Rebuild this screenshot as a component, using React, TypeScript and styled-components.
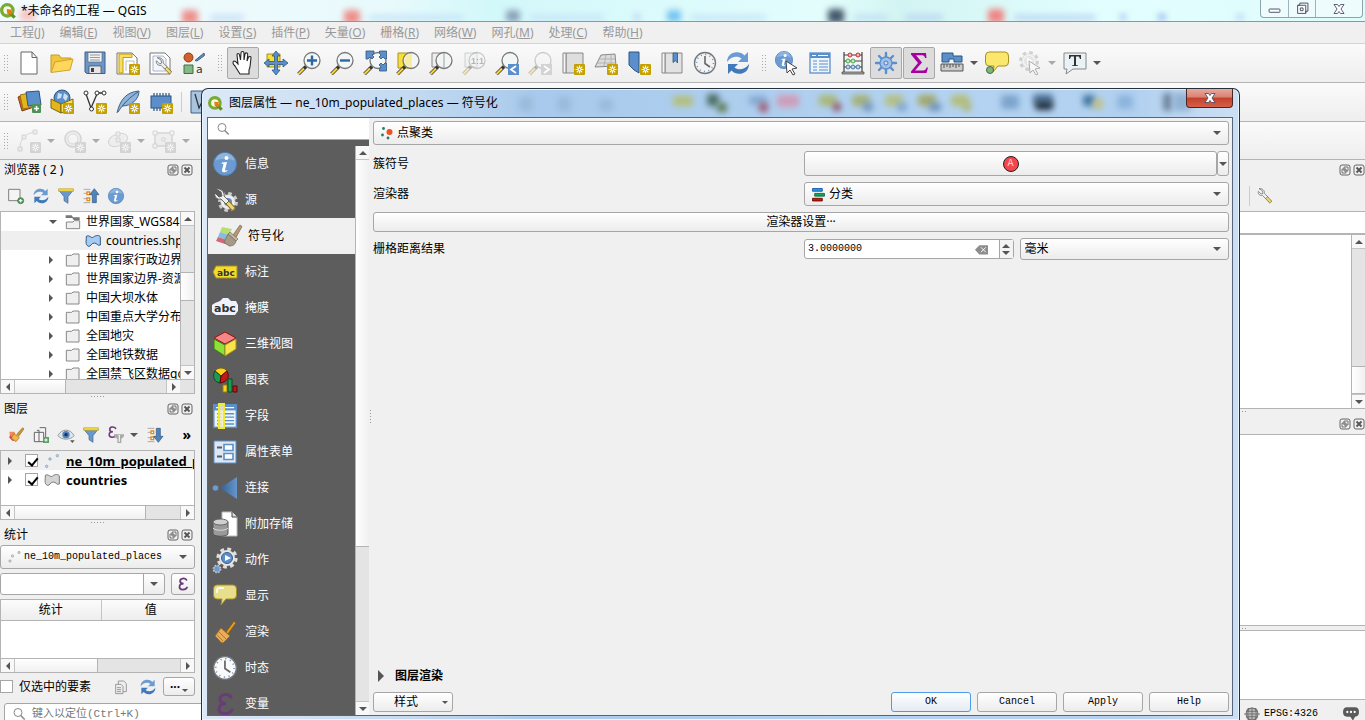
import React from 'react';
import styled, { createGlobalStyle, css } from 'styled-components';

const UI = '"Noto Sans", "Noto Sans CJK SC", sans-serif';
const MONO = '"Liberation Mono", "Noto Sans CJK SC", monospace';

const Global = createGlobalStyle`
  * { box-sizing: border-box; }
  html, body { margin: 0; padding: 0; overflow: hidden; }
  body { background: #f0f0f0; color: #000; font: 12px/18px ${UI}; }
  button, input, select { font: inherit; color: inherit; margin: 0; padding: 0; border: 0; background: none; outline: none; border-radius: 0; }
  button { display: inline-flex; align-items: center; justify-content: center; }
  ul { list-style: none; margin: 0; padding: 0; }
  svg { display: block; flex: none; }
`;

/* ---------- icons ---------- */

const Star = () => (
  <g>
    <rect x="13" y="13" width="11" height="11" rx="1" fill="#c4a000" />
    <path d="M18.500 14.500v8M14.500 18.500h8M15.700 15.700l5.600 5.600M21.300 15.700l-5.600 5.600" stroke="#fff" strokeWidth="1.200" />
    <circle cx="18.500" cy="18.500" r="1" fill="#c4a000" />
  </g>
);

const Lens = ({ children, dim }: { children?: React.ReactNode; dim?: boolean }) => (
  <g opacity={dim ? 0.35 : 1}>
    <path d="M9 15.500L1.500 23" stroke="#333" strokeWidth="3.500" />
    <path d="M7 17.500L1.500 23" stroke="#fcd23c" strokeWidth="2.200" />
    <circle cx="15" cy="9.500" r="8" fill="#f3f6f6" fillOpacity="0.800" stroke="#777" strokeWidth="1.300" />
    {children}
  </g>
);

const Sheet = () => (
  <path d="M1 2h15l5 5v16H1z" fill="#fff" stroke="#777" />
);

const Gear = ({ cx = 12, cy = 12, r = 8, fill = '#8cb0dd', stroke = '#4a72a8' }: { cx?: number; cy?: number; r?: number; fill?: string; stroke?: string }) => (
  <g>
    <circle cx={cx} cy={cy} r={r} fill="none" stroke={stroke} strokeWidth={r / 2} strokeDasharray={`${r * 0.42} ${r * 0.365}`} />
    <circle cx={cx} cy={cy} r={r * 0.9} fill={fill} stroke={stroke} strokeWidth="0.600" />
  </g>
);

const Refresh = () => (
  <g fill="#6b9bd2">
    <path d="M1 11C1 4 7 0 13 1.500c3 .5 4.500 2 5.500 3L22 1v10H12l3.500-3.500C12 4.500 5 5 1 11z" />
    <path d="M23 13c0 7-6 11-12 9.500-3-.5-4.500-2-5.500-3L2 23V13h10l-3.500 3.500C12 19.500 19 19 23 13z" fill="#4179bb" />
  </g>
);

const Info = () => (
  <g>
    <circle cx="12" cy="12" r="11.500" fill="#6b9bd2" stroke="#4f7fb8" />
    <path d="M2 9C4 3 8 1 12 1s8 2 10 8c-5-3-15-3-20 0z" fill="#8db3de" />
    <circle cx="13.500" cy="6" r="2" fill="#fff" />
    <path d="M9 10.500l5-.5-2 8c0 1 1 .8 2 0l.5.700c-2 2-6 2.300-5.500-.7l1.500-6-2-.3z" fill="#fff" />
  </g>
);

const ClockFace = ({ fill = '#f2f2f2' }: { fill?: string }) => (
  <g>
    <circle cx="12" cy="12" r="10.500" fill={fill} stroke="#777" strokeWidth="1.300" />
    <circle cx="12" cy="12" r="8.500" fill="none" stroke="#5b8fcb" strokeWidth="1.500" strokeDasharray="1 3.450" />
    <path d="M12 5v7.500l5 3.500" fill="none" stroke="#666" strokeWidth="1.600" />
  </g>
);

const Wrench = () => (
  <g>
    <path d="M13 13l8 8.500" stroke="#8a7430" strokeWidth="5" />
    <path d="M13.500 13.500l7 7.500" stroke="#f0d77a" strokeWidth="3" />
    <path d="M3 1l5 3 1 4-3 1-4-4C1 9 4 12 8 11l5 5 3-3-5-5c1-4-3-8-8-7z" fill="#eee" stroke="#555" strokeWidth="0.900" />
  </g>
);

const Funnel = () => (
  <g>
    <path d="M1 3h22l-8 10v10l-6-4v-6z" fill="#6b98cc" stroke="#3d6490" />
    <path d="M1 1h22v4H1z" fill="#f6d83c" stroke="#a89020" strokeWidth="0.700" />
  </g>
);

const Epsilon = ({ color = '#6b3a78' }: { color?: string }) => (
  <path d="M18 5c-3-4-11-3-11 2 0 3 3 4.500 6 4.500-4 0-7 2-7 5.500 0 6 10 6 13 1" fill="none" stroke={color} strokeWidth="3" strokeLinecap="round" />
);

const Tip = ({ fill = '#fbe76c' }: { fill?: string }) => (
  <path d="M4 1h16q3.500 0 3.500 4v6q0 4-3.500 4h-7l-5 6 1-6H4q-3.500 0-3.500-4V5q0-4 3.500-4z" fill={fill} stroke="#a89020" />
);

const Cursor = () => <path d="M11 10l11 7-5 1 3 5-2 1-3-5-3 3z" fill="#fff" stroke="#444" />;

const TableShape = () => (
  <g>
    <rect x="2" y="2" width="20" height="20" fill="#eef4fa" stroke="#5b8fcb" strokeWidth="1.300" />
    <path d="M2 2h20v5H2z" fill="#5b8fcb" />
    <path d="M4 4.500h4M10 4.500h10" stroke="#fff" />
    <path d="M5 10h4M11 10h9M5 13h4M11 13h9M5 16h4M11 16h9M5 19h4M11 19h9" stroke="#5b8fcb" strokeWidth="1.200" />
  </g>
);

const icons: Record<string, React.ReactNode> = {
  page: <path d="M4 1h11l5 5.500V23H4zM15 1v5.500h5" fill="#fff" stroke="#666" />,
  open: <><path d="M1 21V4h8l2 3h10v4" fill="#f0c640" stroke="#c79a20" /><path d="M1 21.500L5 11l18-3-3 11z" fill="#ffd75a" stroke="#d0a32a" /></>,
  save: <><path d="M2 1h20v21.500H4L2 21z" fill="#6a96c8" stroke="#3f6088" /><path d="M5 1.500h14V11H5z" fill="#f2f2f2" stroke="#5a6b7d" strokeWidth="0.700" /><path d="M7 4h10M7 6.500h10M7 9h10" stroke="#999" /><path d="M6 15h12v7.500H6z" fill="#e6e6e6" stroke="#445" strokeWidth="0.700" /><path d="M8 17h3v4H8z" fill="#345" /></>,
  layout: <><Sheet /><path d="M3 3h13v3.500H7V22H3z" fill="#f6dc6a" stroke="#c4a000" /><path d="M10 10h8v3M10 10v10" fill="none" stroke="#bbb" /><Star /></>,
  layoutMgr: <><Sheet /><path d="M4 5h10l3 3v12H4z" fill="#f4f6fb" stroke="#a5b5d5" /><g transform="translate(6 6) scale(.75)"><Wrench /></g></>,
  style: <><circle cx="6.500" cy="6.500" r="4.500" fill="#d2622c" stroke="#8e3a15" /><path d="M13 9.500L22 2l.5 2.500L15 10z" fill="#5b8fcb" stroke="#3f6088" /><path d="M2 14h9v8.500H2z" fill="#84b886" stroke="#3f7042" /><text x="14" y="22" fontSize="11" fontFamily="DejaVu Sans" fill="#333">a</text></>,
  hand: <path d="M9 23l-5-8c-2-2-3-4-1-5 2 0 3 2 4 3L6 4c0-2 2-2 2.500 0l1 5L10 2c0-2 3-2 3 0v7l1-6c1-2 3-1 2.700 1L16 10l1.500-4c1-1 2.800-.5 2.500 1l-1 9-1 3v4z" fill="#fff" stroke="#222" strokeWidth="1.100" />,
  panSel: <><path d="M3 3h13v13H3z" fill="#f8df3c" stroke="#a89020" /><path d="M12 0l4 5h-2.500v5.500H19V8l5 4-5 4v-2.500h-5.500V19H16l-4 5-4-5h2.500v-5.500H5V16l-5-4 5-4v2.500h5.500V5H8z" fill="#5b8fcb" stroke="#2d557f" strokeWidth="0.800" /></>,
  zoomIn: <Lens><path d="M15 4.500v10M10 9.500h10" stroke="#2d67a6" strokeWidth="2.400" /></Lens>,
  zoomOut: <Lens><path d="M10 9.500h10" stroke="#2d67a6" strokeWidth="2.400" /></Lens>,
  zoomFull: <><Lens /><path d="M3 0h8v2.500L9 4l2 2-2 2-2-2-2 2H3zM23.500 0h-7v2.500L18 4l-2 2 2 2 2-2 2 2h1.500zM23.500 20h-7v-2l1.500-2-2-2 2-2 2 2 2-2h1.500z" fill="#5b8fcb" stroke="#2d557f" strokeWidth="0.800" /></>,
  zoomSel: <><path d="M2 2h13v15H2z" fill="#f8df3c" stroke="#a89020" /><Lens><path d="M15 3v13a7 7 0 0 1-6-6 7 7 0 0 1 6-7z" fill="#f8e98c" opacity=".7" /></Lens></>,
  zoomLayer: <><path d="M3 2h12v14H3z" fill="#eee" stroke="#888" /><Lens><path d="M15 2v15" stroke="#aaa" /></Lens></>,
  zoomNative: <><g opacity=".35"><path d="M3 2h12v14H3z" fill="#eee" stroke="#888" /></g><Lens dim><text x="9" y="13" fontSize="9" fontWeight="700" fontFamily="Liberation Sans" fill="#444">1:1</text></Lens></>,
  zoomLast: <><Lens /><path d="M13 13h11v11H13z" fill="#5b8fcb" /><path d="M21 15l-5 3.500 5 3.500" fill="none" stroke="#fff" strokeWidth="1.800" /></>,
  zoomNext: <><Lens dim /><path d="M13 13h11v11H13z" fill="#d3d3d3" /><path d="M16 15l5 3.500-5 3.500" fill="none" stroke="#fff" strokeWidth="1.800" /></>,
  newMap: <><path d="M5 2h17v20H5z" fill="#dedede" stroke="#888" /><path d="M5 22H2V2h3z" fill="#f4f4f4" stroke="#888" /><Star /></>,
  new3d: <><path d="M7 4l14-1 1 12-21 1z" fill="#dcdcdc" stroke="#888" /><path d="M12 4l-2 11M17 4v11M5 8h16M3 12h18" stroke="#aaa" strokeWidth=".8" /><Star /></>,
  bookmark: <><path d="M2 1h10v21l-5-3-5-5z" fill="#5b8fcb" stroke="#2d557f" /><Star /></>,
  bookmarks: <><path d="M5 2h17v20H5z" fill="#e2e2e2" stroke="#888" /><path d="M5 22H2V2h3z" fill="#f4f4f4" stroke="#888" /><path d="M13 2h4.500v10l-2-2.500-2.500 2z" fill="#5b8fcb" stroke="#2d557f" strokeWidth=".8" /></>,
  clock: <ClockFace />,
  refresh: <Refresh />,
  identify: <><g transform="scale(.75)"><Info /></g><Cursor /></>,
  table: <TableShape />,
  abacus: <><path d="M3 1v20M21 1v20M3 4h18M3 10h18M3 16h18" stroke="#444" strokeWidth="1.200" /><path d="M1 21h22v2H1z" fill="#aaa" stroke="#444" strokeWidth=".7" /><g stroke="#b33" fill="#f5b5b5"><circle cx="9" cy="4" r="2" /><circle cx="17" cy="4" r="2" /></g><g stroke="#4a4" fill="#c5ecc5"><circle cx="7" cy="10" r="2" /><circle cx="12" cy="10" r="2" /></g><g stroke="#47a" fill="#bcd8ee"><circle cx="7" cy="16" r="2" /><circle cx="12" cy="16" r="2" /><circle cx="17" cy="16" r="2" /></g></>,
  gear: <><path d="M12 2v20M2 12h20M5 5l14 14M19 5L5 19" stroke="#5b8fcb" strokeWidth="2.400" strokeLinecap="round" /><circle cx="12" cy="12" r="6" fill="#9fc0ea" stroke="#5b8fcb" strokeWidth="1.300" /><circle cx="12" cy="12" r="2" fill="#dcdcdc" stroke="#4a7fc0" /></>,
  sigma: <path d="M4 2h15l.5 5h-1.500c-.5-2-1-2.800-3-2.800H9l6 7.300-7 8h8c2 0 3-1 3.500-3H21L19.500 22H4v-1.500l7-8.500-7-8.500z" fill="#a800a0" />,
  measure: <><path d="M2 2h11v3h9v6h-8V8H9v3H2z" fill="#5b8fcb" stroke="#2d557f" /><path d="M1 13h22v7H1z" fill="#ccc" stroke="#555" /><path d="M4 13v4M7 13v3M10 13v4M13 13v3M16 13v4M19 13v3" stroke="#555" /></>,
  tips: <><Tip /><circle cx="5" cy="19" r="3.500" fill="#7fb382" stroke="#3f7042" /></>,
  actionOff: <g opacity=".4"><Gear cx={11} cy={10} r={8} fill="#eee" stroke="#999" /><circle cx="11" cy="10" r="5" fill="#ccc" /><path d="M9 6l6 4-6 4z" fill="#fff" /><Cursor /></g>,
  textAnn: <><path d="M1 2h22v16H10l-7 5 1-5H1z" fill="#eaf2f5" stroke="#888" /><path d="M6 4h12v4h-1l-1-2.500h-3V14l2 .5v.5H9v-.5l2-.5V5.500H8L7 8H6z" fill="#333" /></>,
  addLayer: <><path d="M1 7l12-4 4 14-12 4z" fill="#d2622c" stroke="#8e3a15" /><path d="M3 5l14-3 3 14-14 3z" fill="#e5b61c" stroke="#97760c" /><path d="M9 2l13-1 2 14-13 1z" fill="#5b8fcb" stroke="#2d557f" /><rect x="15" y="14" width="9" height="9" rx="1" fill="#4d9356" /><path d="M19.500 16v5M17 18.500h5" stroke="#fff" strokeWidth="1.500" /></>,
  geopackage: <><circle cx="12" cy="8" r="8" fill="#5b8fcb" stroke="#2d557f" /><path d="M8 3l4 1-1 4-4 1zM14 3l4 3-2 5-3-3z" fill="#cfe0ef" /><path d="M1 9l10 5v9L1 18z" fill="#e5b61c" stroke="#7c6208" /><path d="M11 14l12-5v9l-12 5z" fill="#f8e04a" stroke="#7c6208" /><Star /></>,
  shp: <><path d="M3 4l5 14 6-14M14 3h8" fill="none" stroke="#333" strokeWidth="1.300" /><g fill="#fff" stroke="#333"><circle cx="3" cy="3" r="2" /><circle cx="14" cy="3" r="2" /><circle cx="21" cy="3" r="2" /><circle cx="8.500" cy="19" r="2" /></g><Star /></>,
  spatialite: <><path d="M1 23C4 10 10 2 23 1c0 8-7 15-17 15" fill="#8fb3da" stroke="#3f6088" /><path d="M2 22C8 13 14 7 22 2" stroke="#3f6088" fill="none" /><Star /></>,
  memory: <><path d="M5 3v18M8 3v18M11 3v18M14 3v18M17 3v18M20 3v18" stroke="#2d557f" strokeWidth="1.200" /><rect x="2" y="6" width="20" height="12" fill="#5b8fcb" stroke="#2d557f" /><Star /></>,
  virtual: <><path d="M1 1h20v22H1z" fill="#a9c4de" stroke="#3f6088" /><path d="M5 4l4 14 7-14" fill="none" stroke="#333" strokeWidth="1.300" /></>,
  dCurve: <><path d="M3 20C3 10 8 4 19 3" fill="none" stroke="#999" /><path d="M1 18h4v4H1zM5 6h4v4H5zM16 1h4v4h-4z" fill="#ddd" stroke="#999" /><Star /></>,
  dCircle: <><circle cx="11" cy="10" r="8" fill="#ddd" stroke="#999" strokeWidth="1.500" /><circle cx="11" cy="10" r="5" fill="#f6f6f6" stroke="#aaa" /><Star /></>,
  dEllipse: <><ellipse cx="11" cy="11" rx="10" ry="6" transform="rotate(-20 11 11)" fill="#e3e3e3" stroke="#999" /><path d="M9 3h4v4H9zM9 9h4v4H9z" fill="#ddd" stroke="#999" /><Star /></>,
  dRect: <><path d="M3 4h17v13H3z" fill="#e3e3e3" stroke="#999" strokeWidth="1.500" /><path d="M1 2h4v4H1zM18 2h4v4h-4zM1 15h4v4H1zM10 9h3v3h-3z" fill="#eee" stroke="#999" /><Star /></>,
  info: <Info />,
  source: <><Gear cx={15} cy={14} r={8} fill="#eee" stroke="#ccc" /><circle cx="15" cy="14" r="4" fill="#5b8fcb" /><Wrench /></>,
  symbology: <><path d="M6 3l10 2-3 6-9-3z" fill="#b8de72" /><path d="M4 8l9 3-2 5-9-3z" fill="#84bedb" /><path d="M2 13l9 3 1 5-12-4z" fill="#d0677c" /><path d="M17 11L24 1l2 1.500-6 11z" fill="#b39a78" stroke="#80694a" strokeWidth=".7" /><path d="M14 8l8 7-2 2-8-7z" fill="#c4b8a4" stroke="#76695a" strokeWidth=".7" /><path d="M12 10l8 7c-1 4-3 5-7 5l-5-4z" fill="#a59a88" stroke="#76695a" strokeWidth=".7" /></>,
  labels: <><path d="M0 12l3-6h21v12H3z" fill="#f3dc2c" stroke="#a89020" /><text x="4" y="15.500" fontSize="9" fontWeight="700" fontFamily="DejaVu Sans" fill="#333">abc</text></>,
  mask: <><path d="M2 7l5-2 3-3h5l3 3h5l2 4v6l-3 4H3l-4-3V9z" fill="#eef2fa" /><text x="1" y="16" fontSize="11" fontWeight="700" fontFamily="DejaVu Sans" fill="#333">abc</text></>,
  view3d: <><path d="M12 0l11 6-11 6L1 6z" fill="#f58686" stroke="#a01010" /><path d="M1 7l11 6v11L1 17z" fill="#8de03a" stroke="#3f7a0c" /><path d="M23 7l-11 6v11l11-7z" fill="#fae44c" stroke="#a89020" /></>,
  diagram: <><path d="M8 8L2 3c3-4 9-4 12 0z" fill="#fcd21c" stroke="#7c6208" /><path d="M8 8L2 3c-3 5-1 11 5 12z" fill="#1d9a50" stroke="#0b4b25" /><path d="M8 8l6-5c3 5 1 11-7 12z" fill="#c01818" stroke="#5a0808" /><path d="M10 17h4v7h-4z" fill="#fcd21c" stroke="#a67808" /><path d="M15 11h4v13h-4z" fill="#18a050" stroke="#0b4b25" /><path d="M20 18h4v6h-4z" fill="#c01818" stroke="#5a0808" /></>,
  fields: <><g transform="translate(-1.500 -1.500) scale(1.130)"><TableShape /></g><path d="M6 0h5v24H6z" fill="#f3ecc0" fillOpacity=".8" stroke="#f4ea2c" strokeWidth="2" /></>,
  form: <><path d="M1 1h22v22H1z" fill="#dfe7f0" stroke="#5b8fcb" /><path d="M4 7.500h5M4 16.500h5" stroke="#44617f" strokeWidth="2" /><path d="M11 4.500h9v6h-9zM11 13.500h9v6h-9z" fill="#fff" stroke="#5b8fcb" strokeWidth="1.600" /></>,
  join: <><defs><linearGradient id="joinFill"><stop offset="0" stopColor="#34608f" /><stop offset="1" stopColor="#6596cc" /></linearGradient></defs><circle cx="2.500" cy="12" r="2.800" fill="#6b9bd2" /><path d="M7 12L24 1v22z" fill="url(#joinFill)" /></>,
  aux: <><path d="M9 0h10l5 5v19H9z" fill="#fff" stroke="#bbb" /><path d="M19 0v5h5" fill="#ddd" stroke="#444" /><path d="M0 10v12c2 3 13 3 15 0V10z" fill="#9a9a9a" stroke="#555" /><ellipse cx="7.500" cy="10" rx="7.500" ry="3" fill="#d0d0d0" stroke="#666" /><path d="M0 16c2 3 13 3 15 0" fill="none" stroke="#ddd" /></>,
  action: <><Gear cx={14} cy={10} r={8.5} fill="#e8e8e8" stroke="#ddd" /><circle cx="14" cy="10" r="5.500" fill="#5b8fcb" stroke="#3f6088" /><path d="M12 7l6 3-6 3z" fill="#fff" /><Gear cx={4} cy={21} r={3.5} fill="#6b9bd2" stroke="#ccc" /></>,
  display: <><Tip fill="#e8df8c" /><path d="M4 9V6q0-2 3-2h4" stroke="#fff" strokeWidth="1.500" fill="none" /></>,
  render: <><path d="M13 12L21 1l2 2-8 11z" fill="#dd9a30" stroke="#8a5a10" /><path d="M8 8l9 8-7 7c-2-1-3-1-4-3l-4-4z" fill="#e8ad5a" stroke="#a66d18" /><path d="M6 12l7 7M4 15l6 6" stroke="#a66d18" strokeWidth=".8" /></>,
  temporal: <g transform="translate(-1 -1) scale(1.080)"><ClockFace fill="#fafafa" /></g>,
  epsilon: <Epsilon />,
  addItem: <><path d="M1 2h17v17H1z" fill="#f4f4f4" stroke="#777" strokeWidth="1.400" /><circle cx="19" cy="19" r="4.500" fill="#5da065" stroke="#2d6a36" /><path d="M19 16.500v5M16.500 19h5" stroke="#fff" strokeWidth="1.500" /></>,
  funnel: <Funnel />,
  collapse: <><path d="M1 2h10M1 8h5M1 16h5M1 22h10" stroke="#999" strokeWidth="1.200" /><path d="M6 6h4v4H6zM6 15h4v4H6z" fill="#fff" stroke="#e58a1c" strokeWidth="2" /><path d="M17 1l7 9h-4v12h-6V10h-4z" fill="#4f83bb" stroke="#2d557f" /></>,
  expand: <><path d="M1 2h10M1 8h5M1 16h5M1 22h10" stroke="#999" strokeWidth="1.200" /><path d="M6 6h4v4H6zM6 15h4v4H6z" fill="#fff" stroke="#e58a1c" strokeWidth="2" /><path d="M17 23l7-9h-4V2h-6v12h-4z" fill="#4f83bb" stroke="#2d557f" /></>,
  brush: <><path d="M2 7l8 0 2 10-9-3z" fill="#f08a5a" /><path d="M3 12l8 8-4 1-5-5z" fill="#d84848" /><path d="M13 11L22 1l2 2-8 11z" fill="#c79632" stroke="#8a5a10" strokeWidth=".8" /><path d="M9 10l8 6-5 6-7-5z" fill="#f0b84a" stroke="#a66d18" /></>,
  group: <><path d="M2 8h14v14H2zM6 5h3v17M10 1h9v14" fill="#f4f4f4" stroke="#666" strokeWidth="1.500" /><path d="M15 15h9v9h-9z" fill="#5da065" /><path d="M19.500 17v5M17 19.500h5" stroke="#fff" strokeWidth="1.500" /></>,
  eye: <><path d="M0 13C5 2 19 2 24 13c-5 7-19 7-24 0z" fill="#dde6ee" stroke="#999" strokeWidth="1.500" /><circle cx="12" cy="11.500" r="5.500" fill="#4f83bb" /><circle cx="12" cy="11.500" r="2.500" fill="#17324f" /><path d="M18 20h7l-3.500 4z" fill="#555" /></>,
  epsFilter: <><g transform="translate(-3 -2) scale(.8)"><Epsilon /></g><path d="M9 11h15v3l-4 4v6h-6v-6l-5-4z" fill="#aaa" /><path d="M17 12v10" stroke="#eee" strokeWidth="2" /></>,
  folder: <path d="M2 5h8l2-2h9v18H2z" fill="#efefef" stroke="#888" strokeWidth="1.500" />,
  folderOpen: <><path d="M1 2h9l2 3h10v4H13l-2-3H1z" fill="#777" /><path d="M2 12h10l2-2h8v12H2z" fill="#efefef" stroke="#888" strokeWidth="1.500" /></>,
  poly: <path d="M2 5c5-3 7 4 11 1 3-3 9-3 10 0v12c-4 2-5-3-9-3-5 0-5 6-9 5-5-3-3-7-3-15z" fill="#a6cbf2" stroke="#30567e" strokeWidth="1.500" />,
  polyGrey: <path d="M2 5c5-3 7 4 11 1 3-3 9-3 10 0v12c-4 2-5-3-9-3-5 0-5 6-9 5-5-3-3-7-3-15z" fill="#d4d4d4" stroke="#777" strokeWidth="1.500" />,
  points: <g fill="#c5d9ec" stroke="#7d9dbd" strokeWidth="1.200"><circle cx="4" cy="20" r="1.800" /><circle cx="9" cy="9" r="1.800" /><circle cx="20" cy="4" r="1.800" /></g>,
  pointsGrey: <g fill="#ddd" stroke="#999" strokeWidth="1.500"><circle cx="4" cy="20" r="2.200" /><circle cx="9" cy="10" r="2.200" /><circle cx="22" cy="3" r="2.200" /></g>,
  copy: <g fill="#eee" stroke="#999" strokeWidth="1.500"><path d="M8 3h8l4 4v12H8z" /><path d="M4 8h8l3 3v11H4z" /><path d="M6 13h6M6 16h6M6 19h6" /></g>,
  wrench: <Wrench />,
  search: <><circle cx="10" cy="9" r="8" fill="none" stroke="#888" strokeWidth="2" /><path d="M15.500 15l8 8" stroke="#888" strokeWidth="3" /></>,
  cluster: <><circle cx="17" cy="10" r="6" fill="#f4501e" /><g fill="#1f8060"><circle cx="5" cy="3" r="2.800" /><circle cx="3" cy="16" r="2.800" /><circle cx="14" cy="22" r="2.800" /></g></>,
  category: <><path d="M1 1h18v5H1z" fill="#1ba0d8" stroke="#1548b0" strokeWidth="1.500" /><path d="M5 10h18v5H5z" fill="#18a060" stroke="#063" strokeWidth="1.500" /><path d="M1 19h18v5H1z" fill="#c01c08" stroke="#600" strokeWidth="1.500" /></>,
  globe: <><path d="M6 3h12l3 4H3zM3 17h18l-3 4H6z" fill="#777" /><circle cx="12" cy="12" r="9" fill="#bbb" stroke="#666" strokeWidth="1.300" /><path d="M0 12h24M3 8h18M3 16h18M12 2v20M8 3c-3 6-3 12 0 18M16 3c3 6 3 12 0 18" stroke="#666" fill="none" strokeWidth="1.200" /></>,
  bubble: <><path d="M6 2h12q6 0 6 7t-6 7l-3 6-4-6H6q-6 0-6-7t6-7z" fill="#5a5a5a" /><g fill="#fff"><circle cx="6.500" cy="9" r="1.700" /><circle cx="12" cy="9" r="1.700" /><circle cx="17.500" cy="9" r="1.700" /></g></>,
  logo: <><circle cx="11" cy="11" r="8.500" fill="#f6fbe8" stroke="#79ab33" strokeWidth="5" /><path d="M13 13l9 9" stroke="#5a9327" strokeWidth="5" /><path d="M10 9l8 1-2 2 3 3-3 3-3-3-2 2z" fill="#ee7913" /></>,
  clear: <><path d="M8 4h16v17H8L0 12.500z" fill="#8c8c8c" /><path d="M11 8l9 9M20 8l-9 9" stroke="#fff" strokeWidth="1.800" /></>,
  floatBox: <><rect x="2" y="2" width="20" height="20" rx="4" fill="none" stroke="#555" strokeWidth="1.800" /><path d="M10 6h8v8h-8zM6 10h8v8H6z" fill="#efefef" stroke="#555" strokeWidth="1.600" /></>,
  closeBox: <><rect x="2" y="2" width="20" height="20" rx="4" fill="none" stroke="#555" strokeWidth="1.800" /><path d="M7 7l10 10M17 7L7 17" stroke="#555" strokeWidth="3.800" /></>,
  winClose: <path d="M2 3h7l3 4 3-4h7l-6 9 6 9h-7l-3-4-3 4H2l6-9z" fill="#fff" stroke="#4a5068" strokeWidth="1.800" />,
  winMax: <><path d="M7 2h15v15h-4v4H3V6h4z" fill="#fff" stroke="#4a5068" strokeWidth="1.800" /><path d="M3 6h15v15M8 11h5v5H8z" fill="none" stroke="#4a5068" strokeWidth="1.800" /></>,
  winMin: <rect x="2" y="13" width="20" height="6" rx="1" fill="#fff" stroke="#4a5068" strokeWidth="1.800" />,
};

const Icon = ({ name, size = 24 }: { name: string; size?: number }) => (
  <svg width={size} height={size} viewBox="0 0 24 24" fill="none" overflow="visible" aria-hidden="true">{icons[name]}</svg>
);

/* ---------- shared parts ---------- */

type Dir = 'up' | 'down' | 'left' | 'right';

const Tri = styled.i<{ $dir: Dir; $size?: number; $dim?: boolean }>`
  flex: none;
  width: 0;
  height: 0;
  border: ${p => p.$size ?? 4}px solid transparent;
  ${p => {
    const c = p.$dim ? '#aaa' : '#555';
    if (p.$dir === 'up') return css`border-bottom-color: ${c}; border-top-width: 0;`;
    if (p.$dir === 'down') return css`border-top-color: ${c}; border-bottom-width: 0;`;
    if (p.$dir === 'left') return css`border-right-color: ${c}; border-left-width: 0;`;
    return css`border-left-color: ${c}; border-right-width: 0;`;
  }}
`;

const raised = css`
  border: 1px solid #a6a6a6;
  border-radius: 3px;
  background: linear-gradient(#fff, #ececec);
`;

const Bar = styled.div<{ $v?: boolean; $corner?: boolean }>`
  flex: none;
  display: flex;
  flex-direction: ${p => (p.$v ? 'column' : 'row')};
  width: ${p => (p.$v ? '14px' : 'auto')};
  height: ${p => (p.$v ? 'auto' : '14px')};
  padding-right: ${p => (p.$corner ? 14 : 0)}px;
  background: #e4e4e4;
  border: 0 solid #b4b4b4;
  border-width: ${p => (p.$v ? '0 0 0 1px' : '1px 0 0')};
`;
const BarEnd = styled.button<{ $v?: boolean }>`
  flex: 0 0 14px;
  background: #f8f8f8;
  border: 0 solid #c4c4c4;
  ${p => (p.$v ? '&:first-child{border-bottom-width:1px} &:last-child{border-top-width:1px}' : '&:first-child{border-right-width:1px} &:last-child{border-left-width:1px}')}
`;
const BarTrack = styled.div<{ $grow: number }>`
  flex: ${p => p.$grow} 1 0;
`;
const BarThumb = styled(BarTrack)<{ $v?: boolean; $first?: boolean }>`
  background: linear-gradient(${p => (p.$v ? 'to right' : 'to bottom')}, #fff, #f0f0f0);
  border: 0 solid #b4b4b4;
  border-width: ${p => (p.$v ? `${p.$first ? 0 : 1}px 0 1px` : `0 1px 0 ${p.$first ? 0 : 1}px`)};
`;

function Scroll({ v, corner, parts }: { v?: boolean; corner?: boolean; parts: [number, number, number] }) {
  return (
    <Bar $v={v} $corner={corner}>
      <BarEnd $v={v} aria-label={v ? '向上' : '向左'}><Tri $dir={v ? 'up' : 'left'} /></BarEnd>
      {parts[0] > 0 && <BarTrack $grow={parts[0]} />}
      <BarThumb $v={v} $first={parts[0] === 0} $grow={parts[1]} />
      {parts[2] > 0 && <BarTrack $grow={parts[2]} />}
      <BarEnd $v={v} aria-label={v ? '向下' : '向右'}><Tri $dir={v ? 'down' : 'right'} /></BarEnd>
    </Bar>
  );
}

/* ---------- main window ---------- */

const Page = styled.div`
  position: relative;
  display: flex;
  flex-direction: column;
  height: 100vh;
  overflow: hidden;
  background: #f0f0f0;
`;

const TitleBar = styled.header`
  position: relative;
  flex: 0 0 22px;
  display: flex;
  align-items: center;
  gap: 5px;
  overflow: hidden;
  background: linear-gradient(100deg, #f2fbfd, #e9fafc 28%, #d3f8fa 36%, #e3fdfd 60%, #d2f4f2 66%, #e2fefe 80%, #dffcfc);
  border-bottom: 1px solid #8898a2;
`;
const Blob = styled.i<{ $x: number; $y: number; $w: number; $h: number; $c: string }>`
  position: absolute;
  left: ${p => p.$x}px;
  top: ${p => p.$y}px;
  width: ${p => p.$w}px;
  height: ${p => p.$h}px;
  background: ${p => p.$c};
  border-radius: 3px;
  filter: blur(3px);
`;
const TitleText = styled.h1`
  position: relative;
  margin: 0;
  font: 12px/18px ${UI};
`;
const WinControls = styled.div`
  position: relative;
  align-self: flex-start;
  margin: 0 2px 0 auto;
  display: flex;
  height: 18px;
  border: 1px solid #8fa3ab;
  border-top: 0;
  border-radius: 0 0 4px 4px;
  background: #effcfd;
`;
const WinButton = styled.button<{ $w: number }>`
  width: ${p => p.$w}px;
  & + & { border-left: 1px solid #9fb3ba; }
`;

const MenuBar = styled.nav`
  flex: 0 0 22px;
  display: flex;
  align-items: center;
  gap: 15px;
  padding-left: 10px;
  border-bottom: 1px solid #d4d4d4;
  color: #999;
`;

const ToolRow = styled.div<{ $h: number }>`
  flex: 0 0 ${p => p.$h}px;
  display: flex;
  gap: 4px;
  align-items: center;
  background: linear-gradient(#fafafa, #eeeeee);
  border-bottom: 1px solid #b4b4b4;
`;
const Group = styled.div`
  display: flex;
  align-items: center;
  gap: 1px;
`;
const Handle = styled.i`
  flex: 0 0 12px;
  height: 18px;
  background: radial-gradient(circle, #aaa 0 1px, transparent 1px) 0 0 / 3px 3px content-box;
  padding: 0 3px;
`;
const Tool = styled.button<{ $on?: boolean; $dim?: boolean }>`
  width: 32px;
  height: 32px;
  ${p => p.$on && css`background: #dcdcdc; border: 1px solid #a8a8a8; border-radius: 2px;`}
  ${p => p.$dim && css`filter: grayscale(1); opacity: .35;`}
`;
const Split = styled.div`
  display: flex;
`;
const Drop = styled.button`
  width: 12px;
  height: 32px;
`;
const Sep = styled.i`
  flex: 0 0 7px;
  height: 20px;
  border-left: 1px solid #ccc;
  margin-left: 3px;
  margin-right: -3px;
`;

type ToolItem = { i: string; on?: boolean; drop?: boolean; dim?: boolean };
function Tools({ items }: { items: (string | ToolItem)[] }) {
  return (
    <Group>
      <Handle />
      {items.map((t, k) => {
        const s: ToolItem = typeof t === 'string' ? { i: t } : t;
        if (s.i === '|') return <Sep key={k} />;
        const b = <Tool key={k} $on={s.on} $dim={s.dim} aria-label={s.i}><Icon name={s.i} /></Tool>;
        return s.drop ? <Split key={k}>{b}<Drop aria-label={`${s.i} 选项`}><Tri $dir="down" $dim={s.dim || s.i === 'actionOff'} /></Drop></Split> : b;
      })}
    </Group>
  );
}

const Body = styled.div`
  flex: 1 1 0;
  min-height: 0;
  display: flex;
  justify-content: space-between;
`;
const LeftDock = styled.aside`
  flex: 0 0 195px;
  display: flex;
  flex-direction: column;
  min-width: 0;
`;
const RightDock = styled.aside`
  flex: 0 0 250px;
  display: flex;
  flex-direction: column;
`;
const DockHead = styled.div<{ $edge?: boolean }>`
  flex: 0 0 20px;
  display: flex;
  align-items: center;
  gap: 2px;
  padding: 0 ${p => (p.$edge ? 0 : 2)}px 0 4px;
`;
const DockTitle = styled.h2`
  margin: 0 auto 0 0;
  font: 12px/18px ${UI};
`;
const SmallTool = styled.button`
  height: 20px;
`;
const DockTools = styled.div<{ $right?: boolean }>`
  flex: 0 0 31px;
  display: flex;
  align-items: center;
  gap: ${p => (p.$right ? 4 : 9)}px;
  padding: 0 ${p => (p.$right ? 92 : 4)}px 0 8px;
  justify-content: ${p => (p.$right ? 'flex-end' : 'flex-start')};
`;
const Pusher = styled.button`
  margin-left: auto;
  font: 700 14px/18px ${UI};
`;
const DropMark = styled.span`
  display: flex;
  gap: 6px;
  align-items: center;
`;
const Frame = styled.div<{ $h?: number }>`
  ${p => (p.$h ? `flex: 0 0 ${p.$h}px;` : 'flex: 1 1 0;')}
  min-height: 0;
  display: flex;
  flex-direction: column;
  background: #fff;
  border: 1px solid #b4b4b4;
`;
const TreeArea = styled.div`
  flex: 1 1 0;
  min-height: 0;
  display: flex;
`;
const Tree = styled.ul`
  flex: 1 1 0;
  min-width: 0;
  overflow: hidden;
`;
const Node = styled.li<{ $child?: boolean; $hi?: boolean }>`
  display: flex;
  align-items: center;
  gap: 5px;
  height: 19px;
  padding-left: ${p => (p.$child ? 84 : 48)}px;
  white-space: nowrap;
  background: ${p => (p.$hi ? '#efefef' : 'transparent')};
`;
const Twist = styled.span`
  flex: 0 0 11px;
  display: flex;
`;
const LayerNode = styled.li<{ $on?: boolean }>`
  display: flex;
  align-items: center;
  gap: 6px;
  height: 19px;
  padding-left: 7px;
  white-space: nowrap;
  overflow: hidden;
  background: ${p => (p.$on ? '#efefef' : 'transparent')};
  label { font-weight: 700; font-size: 13px; text-decoration: ${p => (p.$on ? 'underline' : 'none')}; }
`;
const Check = styled.input`
  appearance: none;
  position: relative;
  flex: none;
  width: 13px;
  height: 13px;
  border: 1px solid #a6a6a6;
  background: #fff;
  &:checked::after {
    content: '';
    position: absolute;
    left: 4px;
    top: 1px;
    width: 4px;
    height: 8px;
    border: solid #000;
    border-width: 0 2px 2px 0;
    transform: rotate(40deg);
  }
`;
const Grip = styled.i<{ $h: number; $v?: boolean }>`
  display: block;
  flex: 0 0 ${p => p.$h}px;
  align-self: center;
  ${p => (p.$v
    ? css`height: 16px; background: radial-gradient(circle, #999 0 1px, transparent 1px) 0 0 / 3px 3px repeat-y;`
    : css`width: 16px; background: radial-gradient(circle, #999 0 1px, transparent 1px) 0 50% / 3px 3px repeat-x;`)}
`;

const Combo = styled.div<{ $h: number; $mono?: boolean; $plain?: boolean }>`
  ${raised}
  flex: 0 0 auto;
  height: ${p => p.$h}px;
  display: flex;
  align-items: center;
  gap: 4px;
  padding: 0 7px 0 ${p => (p.$plain ? 4 : 7)}px;
  font: ${p => (p.$mono ? `10px/16px ${MONO}` : `12px/18px ${UI}`)};
  select { appearance: none; flex: 1 1 0; min-width: 0; height: 100%; }
`;
const StatRow = styled.div`
  flex: 0 0 22px;
  display: flex;
  gap: 6px;
  margin: 4px 0;
`;
const EditCombo = styled.div`
  flex: 1 1 0;
  min-width: 0;
  display: flex;
  ${raised}
  input { flex: 1 1 0; min-width: 0; background: #fff; border-right: 1px solid #a6a6a6; border-radius: 3px 0 0 3px; }
  button { flex: 0 0 20px; }
`;
const SquareButton = styled.button`
  ${raised}
  width: 24px;
`;
const StatTable = styled.table`
  width: 100%;
  border-collapse: collapse;
  table-layout: fixed;
  th { height: 20px; font: 12px/18px ${UI}; background: linear-gradient(#fcfcfc, #ededed); border-bottom: 1px solid #b4b4b4; padding: 0; }
  th:first-child { width: 100px; }
  th + th { border-left: 1px solid #c4c4c4; padding-left: 6px; }
`;
const Filler = styled.div`
  flex: 1 1 0;
`;
const CheckRow = styled.div`
  flex: 0 0 27px;
  display: flex;
  align-items: center;
  gap: 7px;
  label { display: flex; align-items: center; gap: 6px; margin-right: auto; }
`;
const IconPair = styled.span`
  display: flex;
  gap: 11px;
`;
const MoreButton = styled.button`
  ${raised}
  width: 32px;
  height: 19px;
  gap: 2px;
  font-weight: 700;
  i { align-self: flex-end; margin-bottom: 3px; }
`;

const Pane = styled.div<{ $h: number }>`
  flex: 0 0 ${p => p.$h}px;
  display: flex;
  justify-content: flex-end;
  background: #fff;
  border: solid #b4b4b4;
  border-width: 1px 0;
`;

const StatusBar = styled.footer`
  flex: 0 0 20px;
  height: 20px;
  display: flex;
  align-items: flex-start;
  padding: 3px 6px 0 4px;
`;
const Locator = styled.label`
  flex: 0 0 300px;
  height: 22px;
  display: flex;
  align-items: center;
  gap: 7px;
  padding-left: 8px;
  background: #fff;
  border: 1px solid #a6a6a6;
  border-radius: 3px;
  input { flex: 1 1 0; min-width: 0; font: 11px/18px ${MONO}; }
  input::placeholder { color: #777; opacity: 1; }
`;
const StatusButton = styled.button`
  height: 22px;
  gap: 4px;
  margin-left: 25px;
  font: 10px/16px ${MONO};
`;

/* ---------- dialog ---------- */

const Dialog = styled.section`
  position: absolute;
  left: 201px;
  right: 125px;
  top: 88px;
  bottom: 0;
  display: flex;
  flex-direction: column;
  padding: 0 6px 4px 5px;
  border: 1px solid #27313c;
  border-bottom: 0;
  border-radius: 7px 7px 0 0;
  overflow: hidden;
  background: linear-gradient(to right, #dbe8f6, #c3daf1 20%, #a9caec 32%, #b4d3f2 75%, #b2d1f0 90%, #cbdff4);
  box-shadow: inset 0 0 0 1px #e8f4ff;
`;
const DialogTitle = styled.header`
  position: relative;
  flex: 0 0 28px;
  display: flex;
  align-items: center;
  gap: 6px;
  padding-left: 1px;
`;
const DialogClose = styled.button`
  position: relative;
  align-self: flex-start;
  margin-left: auto;
  width: 47px;
  height: 19px;
  border: 1px solid #4d2424;
  border-top: 0;
  border-radius: 0 0 4px 4px;
  background: linear-gradient(#e8a99c, #d98273 45%, #c2412a 50%, #d4604a);
`;
const DialogBody = styled.div`
  flex: 1 1 0;
  min-height: 0;
  display: flex;
  border: 1px solid #56657a;
  background: #f0f0f0;
`;
const Side = styled.nav`
  flex: 0 0 161px;
  min-width: 0;
  display: flex;
  flex-direction: column;
  background: #5d5d5d;
`;
const SideSearch = styled.label`
  flex: 0 0 22px;
  margin-bottom: 6px;
  display: flex;
  align-items: center;
  gap: 6px;
  padding-left: 9px;
  background: #fff;
  border-bottom: 1px solid #aaa;
  input { flex: 1 1 0; min-width: 0; }
`;
const SideScroll = styled.div`
  flex: 1 1 0;
  min-height: 0;
  display: flex;
`;
const SideList = styled.ul`
  flex: 1 1 0;
  min-width: 0;
  overflow: hidden;
`;
const SideItem = styled.button<{ $on?: boolean }>`
  width: 100%;
  height: 36px;
  justify-content: flex-start;
  gap: 8px;
  padding-left: ${p => (p.$on ? 8 : 5)}px;
  color: ${p => (p.$on ? '#000' : '#fff')};
  background: ${p => (p.$on ? '#f0f0f0' : 'transparent')};
`;
const Form = styled.div`
  flex: 1 1 0;
  min-width: 0;
  display: flex;
  flex-direction: column;
  gap: 6px;
  padding: 3px;
  padding-left: 0;
`;
const Field = styled.div`
  display: grid;
  grid-template-columns: 1fr 1fr;
  column-gap: 6px;
  align-items: center;
`;
const Pair = styled.div<{ $even?: boolean }>`
  display: grid;
  grid-template-columns: ${p => (p.$even ? '1fr 1fr' : '1fr 12px')};
  column-gap: ${p => (p.$even ? 6 : 0)}px;
  align-items: center;
`;
const Push = styled.button<{ $h: number; $w?: number; $main?: boolean; $mono?: boolean }>`
  ${raised}
  height: ${p => p.$h}px;
  ${p => p.$w && `width: ${p.$w}px;`}
  ${p => p.$main && 'border-color: #4d9be6; background: linear-gradient(#fff, #e4ebf2);'}
  ${p => p.$mono && `font: 10px/16px ${MONO};`}
`;
const Marker = styled.span`
  width: 16px;
  height: 16px;
  border: 1px solid #222;
  border-radius: 50%;
  background: #f5454c;
  color: #ffd5d5;
  font: 10px/14px ${MONO};
`;
const Spin = styled.div`
  ${raised}
  height: 20px;
  display: flex;
  align-items: center;
  background: #fff;
  padding-left: 3px;
  input { flex: 1 1 0; min-width: 0; font: 10px/16px ${MONO}; }
`;
const SpinButtons = styled.div`
  width: 14px;
  height: 100%;
  margin-left: 11px;
  display: flex;
  flex-direction: column;
  justify-content: center;
  gap: 3px;
  border-left: 1px solid #a6a6a6;
  background: #f4f4f4;
`;
const Section = styled.button`
  align-self: flex-start;
  margin-top: auto;
  height: 20px;
  gap: 11px;
  padding-left: 5px;
  font-weight: 700;
`;
const Buttons = styled.div`
  display: flex;
  gap: 6px;
  > :first-child { margin-right: auto; }
`;
const StylePush = styled(Push)`
  justify-content: space-between;
  padding: 0 4px 0 20px;
`;

const menus: [string, string][] = [['工程', 'J'], ['编辑', 'E'], ['视图', 'V'], ['图层', 'L'], ['设置', 'S'], ['插件', 'P'], ['矢量', 'O'], ['栅格', 'R'], ['网络', 'W'], ['网孔', 'M'], ['处理', 'C'], ['帮助', 'H']];
const folders = ['世界国家行政边界', '世界国家边界-资源', '中国大坝水体', '中国重点大学分布', '全国地灾', '全国地铁数据', '全国禁飞区数据qgis'];
const pages: [string, string][] = [['info', '信息'], ['source', '源'], ['symbology', '符号化'], ['labels', '标注'], ['mask', '掩膜'], ['view3d', '三维视图'], ['diagram', '图表'], ['fields', '字段'], ['form', '属性表单'], ['join', '连接'], ['aux', '附加存储'], ['action', '动作'], ['display', '显示'], ['render', '渲染'], ['temporal', '时态'], ['epsilon', '变量']];

const titleBlobs: [number, number, number, number, string][] = [
  [20, 9, 16, 12, '#f6c4c4'], [182, 10, 16, 14, '#ec8f8c'], [210, 15, 34, 5, '#c5dcf4'], [344, 10, 16, 14, '#ec8f8c'], [368, 15, 96, 5, '#c5e4f6'], [506, 10, 14, 12, '#8ba3b8'], [530, 15, 74, 5, '#c5e4f6'], [634, 14, 6, 6, '#b4c8f0'], [667, 10, 14, 12, '#76c4f0'], [690, 15, 76, 5, '#c5e4f6'], [828, 9, 16, 14, '#44586a'], [854, 15, 34, 5, '#c0def2'], [905, 15, 38, 5, '#b8d4f2'], [988, 9, 16, 14, '#ee8684'], [1014, 15, 82, 5, '#b8d4f2'], [1120, 14, 6, 6, '#9cb8f0'], [1158, 14, 8, 6, '#8fb0ec'], [1236, 14, 8, 6, '#b8d4f4'],
];
const glassBlobs: [number, number, number, number, string][] = [
  [312, 8, 14, 14, '#9bbadb'], [350, 8, 14, 14, '#9bbadb'], [392, 10, 14, 12, '#9bbadb'], [466, 7, 20, 10, '#b4be78'], [500, 5, 12, 12, '#4b6f64'], [510, 14, 10, 9, '#5c7a50'], [542, 7, 18, 9, '#86a8d0'], [552, 14, 9, 9, '#a0566c'], [570, 6, 22, 12, '#cf9cb8'], [612, 6, 18, 11, '#a9b878'], [626, 14, 8, 8, '#8f4c60'], [645, 6, 18, 11, '#a6b078'], [656, 14, 10, 8, '#6c93c0'], [678, 6, 18, 11, '#b4c080'], [690, 14, 10, 8, '#7ba3cf'], [711, 6, 18, 11, '#a3a868'], [722, 14, 12, 8, '#6c90b8'], [744, 6, 18, 11, '#b4be78'], [756, 14, 8, 8, '#b0b468'], [794, 6, 18, 14, '#7ca4cc'], [826, 5, 20, 10, '#54789c'], [828, 12, 18, 9, '#20303f'], [876, 6, 12, 11, '#3f74a2'], [886, 10, 10, 10, '#c4c084'], [910, 6, 16, 14, '#8db4dc'], [956, 4, 9, 18, '#6c8298'], [966, 4, 18, 18, '#92b2d4'],
];

function DockButtons() {
  return (
    <>
      <SmallTool aria-label="浮动"><Icon name="floatBox" size={12} /></SmallTool>
      <SmallTool aria-label="关闭面板"><Icon name="closeBox" size={12} /></SmallTool>
    </>
  );
}
const Small = ({ name }: { name: string }) => <SmallTool aria-label={name}><Icon name={name} size={16} /></SmallTool>;

export default function App() {
  return (
    <Page>
      <Global />
      <TitleBar>
        {titleBlobs.map(([x, y, w, h, c]) => <Blob key={x} $x={x} $y={y} $w={w} $h={h} $c={c} />)}
        <TitleText as="span"><Icon name="logo" size={16} /></TitleText>
        <TitleText>*未命名的工程 — QGIS</TitleText>
        <WinControls>
          <WinButton $w={27} aria-label="最小化"><Icon name="winMin" size={13} /></WinButton>
          <WinButton $w={27} aria-label="还原"><Icon name="winMax" size={13} /></WinButton>
          <WinButton $w={47} aria-label="关闭"><Icon name="winClose" size={12} /></WinButton>
        </WinControls>
      </TitleBar>
      <MenuBar>
        {menus.map(([t, k]) => <button key={t}><span>{t}(<u>{k}</u>)</span></button>)}
      </MenuBar>
      <ToolRow $h={39}>
        <Tools items={['page', 'open', 'save', 'layout', 'layoutMgr', 'style']} />
        <Tools items={[{ i: 'hand', on: true }, 'panSel', 'zoomIn', 'zoomOut', 'zoomFull', 'zoomSel', 'zoomLayer', 'zoomNative', 'zoomLast', 'zoomNext', 'newMap', 'new3d', 'bookmark', 'bookmarks', 'clock', 'refresh']} />
        <Tools items={['identify', 'table', 'abacus', { i: 'gear', on: true }, { i: 'sigma', on: true }, { i: 'measure', drop: true }, 'tips', { i: 'actionOff', drop: true }, { i: 'textAnn', drop: true }]} />
      </ToolRow>
      <ToolRow $h={39}>
        <Tools items={['addLayer', 'geopackage', 'shp', 'spatialite', 'memory', '|', 'virtual']} />
      </ToolRow>
      <ToolRow $h={38}>
        <Tools items={[{ i: 'dCurve', drop: true, dim: true }, { i: 'dCircle', drop: true, dim: true }, { i: 'dEllipse', drop: true, dim: true }, { i: 'dRect', drop: true, dim: true }]} />
      </ToolRow>

      <Body>
        <LeftDock>
          <DockHead><DockTitle>浏览器 ( 2 )</DockTitle><DockButtons /></DockHead>
          <DockTools>
            <Small name="addItem" /><Small name="refresh" /><Small name="funnel" /><Small name="collapse" /><Small name="info" />
          </DockTools>
          <Frame $h={183}>
            <TreeArea>
              <Tree>
                <Node><Twist><Tri $dir="down" /></Twist><Icon name="folderOpen" size={16} />世界国家_WGS84</Node>
                <Node $child $hi><Icon name="poly" size={16} />countries.shp</Node>
                {folders.map(f => <Node key={f}><Twist><Tri $dir="right" /></Twist><Icon name="folder" size={16} />{f}</Node>)}
              </Tree>
              <Scroll v parts={[47, 27, 65]} />
            </TreeArea>
            <Scroll corner parts={[0, 51, 101]} />
          </Frame>
          <Grip $h={5} />
          <DockHead><DockTitle>图层</DockTitle><DockButtons /></DockHead>
          <DockTools>
            <Small name="brush" /><Small name="group" /><Small name="eye" /><Small name="funnel" />
            <DropMark><Small name="epsFilter" /><Tri $dir="down" /></DropMark>
            <Small name="expand" />
            <Pusher aria-label="更多">»</Pusher>
          </DockTools>
          <Frame $h={70}>
            <Tree>
              <LayerNode $on><Twist><Tri $dir="right" /></Twist><Check type="checkbox" id="l1" defaultChecked /><Icon name="points" size={16} /><label htmlFor="l1">ne_10m_populated_places</label></LayerNode>
              <LayerNode><Twist><Tri $dir="right" /></Twist><Check type="checkbox" id="l2" defaultChecked /><Icon name="polyGrey" size={16} /><label htmlFor="l2">countries</label></LayerNode>
            </Tree>
            <Scroll parts={[0, 132, 34]} />
          </Frame>
          <Grip $h={5} />
          <DockHead><DockTitle>统计</DockTitle><DockButtons /></DockHead>
          <Combo $h={24} $mono>
            <Icon name="pointsGrey" size={12} />
            <select aria-label="统计图层"><option>ne_10m_populated_places</option></select>
            <Tri $dir="down" />
          </Combo>
          <StatRow>
            <EditCombo><input aria-label="字段" /><button aria-label="选择字段"><Tri $dir="down" /></button></EditCombo>
            <SquareButton aria-label="表达式"><Icon name="epsilon" size={14} /></SquareButton>
          </StatRow>
          <Frame>
            <StatTable><thead><tr><th>统计</th><th>值</th></tr></thead></StatTable>
            <Filler />
            <Scroll parts={[0, 83, 83]} />
          </Frame>
          <CheckRow>
            <label><Check type="checkbox" />仅选中的要素</label>
            <IconPair><Small name="copy" /><Small name="refresh" /></IconPair>
            <MoreButton aria-label="更多统计">···<Tri $dir="down" $size={3} /></MoreButton>
          </CheckRow>
        </LeftDock>

        <RightDock>
          <DockHead $edge><DockTitle /><DockButtons /></DockHead>
          <DockTools $right><Sep /><Small name="wrench" /></DockTools>
          <Pane $h={23} />
          <Pane $h={175}><Scroll v parts={[120, 27, 0]} /></Pane>
          <Grip $h={5} />
          <DockHead $edge><DockTitle /><DockButtons /></DockHead>
          <Pane $h={192} />
          <Grip $h={4} />
          <Pane $h={70} />
        </RightDock>
      </Body>
      <StatusBar>
        <Locator><Icon name="search" size={12} /><input placeholder="键入以定位(Ctrl+K)" aria-label="定位" /></Locator>
        <Filler />
        <StatusButton><Icon name="globe" size={16} />EPSG:4326</StatusButton>
        <StatusButton aria-label="消息"><Icon name="bubble" size={16} /></StatusButton>
      </StatusBar>

      <Dialog role="dialog" aria-label="图层属性">
        <DialogTitle>
          {glassBlobs.map(([x, y, w, h, c]) => <Blob key={x} $x={x} $y={y} $w={w} $h={h} $c={c} />)}
          <Icon name="logo" size={15} />
          <TitleText as="h2">图层属性 — ne_10m_populated_places — 符号化</TitleText>
          <DialogClose aria-label="关闭"><Icon name="winClose" size={12} /></DialogClose>
        </DialogTitle>
        <DialogBody>
          <Side>
            <SideSearch><Icon name="search" size={12} /><input aria-label="搜索" /></SideSearch>
            <SideScroll>
              <SideList>
                {pages.map(([i, t], k) => <li key={i}><SideItem $on={k === 2}><Icon name={i} />{t}</SideItem></li>)}
              </SideList>
              <Scroll v parts={[0, 387, 155]} />
            </SideScroll>
          </Side>
          <Grip $h={4} $v />
          <Form>
            <Combo $h={24}>
              <Icon name="cluster" size={12} />
              <select aria-label="渲染类型"><option>点聚类</option></select>
              <Tri $dir="down" />
            </Combo>
            <Field>
              <span>簇符号</span>
              <Pair>
                <Push $h={25} aria-label="簇符号"><Marker>A</Marker></Push>
                <Push $h={25} aria-label="符号选项"><Tri $dir="down" /></Push>
              </Pair>
            </Field>
            <Field>
              <label htmlFor="renderer">渲染器</label>
              <Combo $h={24}>
                <Icon name="category" size={13} />
                <select id="renderer"><option>分类</option></select>
                <Tri $dir="down" />
              </Combo>
            </Field>
            <Push $h={20}>渲染器设置···</Push>
            <Field>
              <label htmlFor="dist">栅格距离结果</label>
              <Pair $even>
                <Spin>
                  <input id="dist" defaultValue="3.0000000" />
                  <Icon name="clear" size={13} />
                  <SpinButtons>
                    <button aria-label="增加"><Tri $dir="up" /></button>
                    <button aria-label="减少"><Tri $dir="down" /></button>
                  </SpinButtons>
                </Spin>
                <Combo $h={22} $plain>
                  <select aria-label="单位"><option>毫米</option></select>
                  <Tri $dir="down" />
                </Combo>
              </Pair>
            </Field>
            <Section><Tri $dir="right" $size={6} />图层渲染</Section>
            <Buttons>
              <StylePush $h={20} $w={80}>样式<Tri $dir="down" $size={3} /></StylePush>
              <Push $h={20} $w={80} $main $mono>OK</Push>
              <Push $h={20} $w={80} $mono>Cancel</Push>
              <Push $h={20} $w={80} $mono>Apply</Push>
              <Push $h={20} $w={80} $mono>Help</Push>
            </Buttons>
          </Form>
        </DialogBody>
      </Dialog>
    </Page>
  );
}
